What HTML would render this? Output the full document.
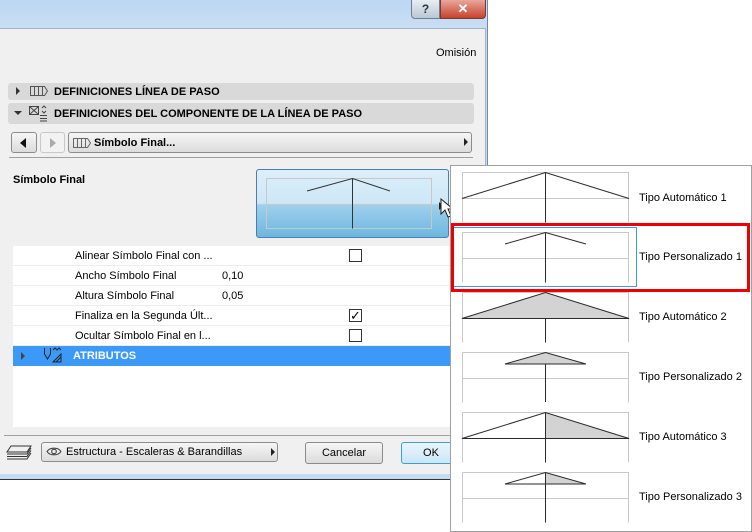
<!DOCTYPE html>
<html><head><meta charset="utf-8"><style>
*{box-sizing:border-box;margin:0;padding:0}
body{width:752px;height:532px;background:#fff;position:relative;overflow:hidden;font-family:"Liberation Sans",sans-serif;font-size:11px;color:#000}
.a{position:absolute}
.win{left:0;top:0;width:488px;height:480px;background:#c5dcf2;border-right:1px solid #6f8aa8;border-bottom:1px solid #4a6a8a}
.body{left:0;top:28px;width:486px;height:446px;background:#f0f0f0;border-top:1px solid #9fb4c9;border-right:1px solid #9fb4c9}
.sec{left:8px;width:466px;background:#d9d9d9;border-radius:3px;font-weight:bold;font-size:11px;line-height:18px;padding-left:46px}
.btn{background:linear-gradient(#f6f6f6,#dcdcdc);border:1px solid #8c8c8c;border-radius:3px}
.row{left:13px;width:437px;height:20px;background:#fff;border-bottom:1px solid #ececec;line-height:21px}
.row span{position:absolute}
.cb{position:absolute;left:336px;top:3px;width:13px;height:13px;border:1px solid #333;background:#fff}
.lbl{left:639px;font-size:11px}
</style></head><body>
<div class="a win"></div>
<div class="a" style="left:0;top:0;width:486px;height:28px;background:linear-gradient(#bcd7f3,#c9def3)"></div>
<div class="a" style="left:411px;top:0;width:29px;height:19px;background:linear-gradient(#e8eef5,#b9c7d6);border:1px solid #6d7f92;border-top:0;border-radius:0 0 0 4px;text-align:center;font-weight:bold;color:#333;font-size:12px;line-height:18px">?</div>
<div class="a" style="left:440px;top:0;width:46px;height:19px;background:linear-gradient(#e9a79b,#c7422c);border:1px solid #7a3a30;border-top:0;border-radius:0 0 4px 0;text-align:center;color:#fff;font-weight:bold;font-size:13px;line-height:18px">✕</div>
<div class="a body"></div>
<div class="a" style="left:436px;top:47px">Omisión</div>
<div class="a sec" style="top:83px;height:17px">DEFINICIONES LÍNEA DE PASO</div>
<div class="a" style="left:16px;top:87px;border-left:4px solid #333;border-top:4px solid transparent;border-bottom:4px solid transparent"></div>
<svg class="a" style="left:30px;top:85px" width="18" height="12"><path d="M0.5 1.5h14l3 4.5-3 4.5h-14z M4.5 1.5v9 M8.5 1.5v9 M12.5 1.5v9" fill="none" stroke="#555"/></svg>
<div class="a sec" style="top:103px;height:21px;line-height:22px">DEFINICIONES DEL COMPONENTE DE LA LÍNEA DE PASO</div>
<div class="a" style="left:14px;top:111px;border-top:4px solid #333;border-left:4px solid transparent;border-right:4px solid transparent"></div>
<svg class="a" style="left:28px;top:105px" width="20" height="17"><rect x="1.5" y="1.5" width="9" height="8" fill="none" stroke="#444"/><path d="M1.5 1.5l9 8M10.5 1.5l-9 8M12 10.5h7M12 13.5h7M12 16h7M14 3l2-2 2 2M14 6l2 2 2-2" stroke="#444" fill="none"/></svg>
<div class="a btn" style="left:11px;top:132px;width:26px;height:21px"></div>
<div class="a" style="left:20px;top:138px;border-right:6px solid #111;border-top:5px solid transparent;border-bottom:5px solid transparent"></div>
<div class="a btn" style="left:40px;top:132px;width:25px;height:21px;background:#f2f2f2;border-color:#c8c8c8"></div>
<div class="a" style="left:50px;top:138px;border-left:6px solid #aaa;border-top:5px solid transparent;border-bottom:5px solid transparent"></div>
<div class="a btn" style="left:68px;top:132px;width:404px;height:21px;font-weight:bold;line-height:20px;padding-left:25px">Símbolo Final...</div>
<svg class="a" style="left:73px;top:137px" width="18" height="12"><path d="M0.5 1.5h14l3 4.5-3 4.5h-14z M4.5 1.5v9 M8.5 1.5v9 M12.5 1.5v9" fill="none" stroke="#666"/></svg>
<div class="a" style="left:464px;top:138px;border-left:4px solid #222;border-top:4px solid transparent;border-bottom:4px solid transparent"></div>
<div class="a" style="left:9px;top:157px;width:464px;height:1px;background:#a0a0a0"></div>
<div class="a" style="left:13px;top:174px;font-weight:bold">Símbolo Final</div>
<div class="a" style="left:256px;top:169px;width:193px;height:69px;border:1px solid #4a7fa8;border-radius:3px;background:linear-gradient(#dceffa 0%,#cde7f6 50%,#9fd0ec 52%,#6db7e0 100%)"></div>
<svg class="a" style="left:256px;top:169px" width="193" height="69"><rect x="10.5" y="9.5" width="165" height="50" fill="none" stroke="#c8c8c8"/><path d="M10.5 35.5h165" stroke="#c8c8c8"/><path d="M51 22L96.5 9.5 134 22M96.5 9.5v50" fill="none" stroke="#333"/><path d="M183 33l4 4-4 4z" fill="#222"/></svg>
<svg class="a" style="left:440px;top:198px" width="14" height="22"><path d="M1 1v15l4-4 3 7 3-1-3-7h5z" fill="#fff" stroke="#222"/></svg>
<div class="a row" style="top:246px"><span style="left:62px">Alinear Símbolo Final con ...</span><div class="cb"></div></div>
<div class="a row" style="top:266px"><span style="left:62px">Ancho Símbolo Final</span><span style="left:209px">0,10</span></div>
<div class="a row" style="top:286px"><span style="left:62px">Altura Símbolo Final</span><span style="left:209px">0,05</span></div>
<div class="a row" style="top:306px"><span style="left:62px">Finaliza en la Segunda Últ...</span><div class="cb" style="font-size:13px;line-height:11px;text-align:center">✓</div></div>
<div class="a row" style="top:326px"><span style="left:62px">Ocultar Símbolo Final en l...</span><div class="cb"></div></div>
<div class="a row" style="top:346px;background:#3d99f7;color:#fff;font-weight:bold;border:0"><span style="left:60px">ATRIBUTOS</span></div>
<div class="a" style="left:21px;top:352px;border-left:4px solid #444;border-top:4px solid transparent;border-bottom:4px solid transparent"></div>
<svg class="a" style="left:43px;top:347px" width="20" height="17"><path d="M1.5 1v6l3 5 3-5V1M10 3l2-2 2 2 2-2 2 2M10 15l8-8v8z M13 15l5-5" fill="none" stroke="#222"/></svg>
<div class="a" style="left:13px;top:366px;width:437px;height:61px;background:#fff"></div>
<div class="a" style="left:4px;top:435px;width:482px;height:1px;background:#a0a0a0"></div>
<svg class="a" style="left:6px;top:444px" width="26" height="16"><path d="M5 2h20l-4 6H1z M1 10h20l4-6M1 12.5h20l4-6M1 15h20l4-6" fill="none" stroke="#333"/></svg>
<div class="a btn" style="left:41px;top:442px;width:237px;height:20px;line-height:19px;padding-left:24px;font-size:11px">Estructura - Escaleras &amp; Barandillas</div>
<svg class="a" style="left:46px;top:446px" width="16" height="11"><path d="M1 5.5C4 1 12 1 15 5.5 12 10 4 10 1 5.5z" fill="none" stroke="#333"/><circle cx="8" cy="5.5" r="2.3" fill="none" stroke="#333"/></svg>
<div class="a" style="left:271px;top:448px;border-left:4px solid #222;border-top:4px solid transparent;border-bottom:4px solid transparent"></div>
<div class="a btn" style="left:305px;top:442px;width:78px;height:22px;text-align:center;line-height:21px">Cancelar</div>
<div class="a btn" style="left:401px;top:442px;width:60px;height:22px;text-align:center;line-height:21px;border-color:#3c9fd9;background:linear-gradient(#eaf5fc,#cbe6f7)">OK</div>
<div class="a" style="left:0;top:474px;width:488px;height:6px;background:#c5dcf2;border-bottom:1px solid #333"></div>
<div class="a" style="left:450px;top:165px;width:302px;height:367px;background:#fff;border:1px solid #a0a0a0"></div>
<svg class="a" style="left:450px;top:165px" width="302" height="367">
<g stroke="#c8c8c8" fill="none">
<path d="M12.5 7.5h166v50M12.5 7.5v50M12.5 33.5h166"/>
<path d="M12.5 67.5h166v50M12.5 67.5v50M12.5 93.5h166"/>
<path d="M12.5 127.5h166v50M12.5 127.5v50M12.5 153.5h166"/>
<path d="M12.5 187.5h166v50M12.5 187.5v50M12.5 213.5h166"/>
<path d="M12.5 247.5h166v50M12.5 247.5v50M12.5 273.5h166"/>
<path d="M12.5 307.5h166v50M12.5 307.5v50M12.5 333.5h166"/>
</g>
<g stroke="#2a2a2a" fill="none">
<path d="M12 33.5L95.5 7.5 179 33.5M95.5 7.5v50"/>
<path d="M55 79L95.5 67.5 136 79M95.5 67.5v50"/>
<path d="M12 153.5L95.5 127.5 179 153.5z" fill="#d3d3d3"/><path d="M95.5 153.5v24"/>
<path d="M55 199L95.5 187.5 136 199z" fill="#d3d3d3"/><path d="M95.5 199v38"/>
<path d="M95.5 247.5L179 273.5H95.5z" fill="#d3d3d3" stroke="none"/>
<path d="M12 273.5L95.5 247.5 179 273.5H12M95.5 247.5v50"/>
<path d="M95.5 307.5L136 319H95.5z" fill="#d3d3d3" stroke="none"/>
<path d="M55 319L95.5 307.5 136 319H55M95.5 307.5v50"/>
</g>
<rect x="3.5" y="62.5" width="183" height="59" fill="none" stroke="#3d99f7"/>
<rect x="2.5" y="59.5" width="296" height="66" fill="none" stroke="#e00" stroke-width="3"/>
</svg>
<div class="a lbl" style="top:192px">Tipo Automático 1</div>
<div class="a lbl" style="top:251px">Tipo Personalizado 1</div>
<div class="a lbl" style="top:311px">Tipo Automático 2</div>
<div class="a lbl" style="top:371px">Tipo Personalizado 2</div>
<div class="a lbl" style="top:431px">Tipo Automático 3</div>
<div class="a lbl" style="top:491px">Tipo Personalizado 3</div>
</body></html>
